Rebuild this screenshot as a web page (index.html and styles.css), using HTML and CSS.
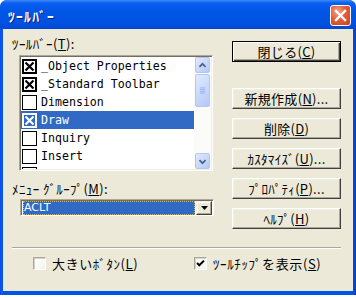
FILE: index.html
```html
<!DOCTYPE html>
<html lang="ja">
<head>
<meta charset="utf-8">
<title>ﾂｰﾙﾊﾞｰ</title>
<link rel="stylesheet" href="styles.css">
</head>
<body>
<div class="window">
  <div class="titlebar">
    <span class="title">ﾂｰﾙﾊﾞｰ</span>
    <span class="close"><svg width="19" height="19" viewBox="0 0 19 19"><path d="M5 5 L14 14 M14 5 L5 14" stroke="#fff" stroke-width="2.4" stroke-linecap="square"/></svg></span>
  </div>
  <div class="client">
    <div class="main">
      <div class="left">
        <div class="label">ﾂｰﾙﾊﾞｰ(<u>T</u>):</div>
        <div class="listbox">
          <ul class="items">
            <li class="item"><svg class="box" width="15" height="15" viewBox="0 0 15 15"><rect x="1" y="1" width="13" height="13" fill="#fff" stroke="#000" stroke-width="2"/><path d="M3.5 3.5 L11.5 11.5 M11.5 3.5 L3.5 11.5" stroke="#000" stroke-width="2.2"/></svg><span>_Object Properties</span></li>
            <li class="item"><svg class="box" width="15" height="15" viewBox="0 0 15 15"><rect x="1" y="1" width="13" height="13" fill="#fff" stroke="#000" stroke-width="2"/><path d="M3.5 3.5 L11.5 11.5 M11.5 3.5 L3.5 11.5" stroke="#000" stroke-width="2.2"/></svg><span>_Standard Toolbar</span></li>
            <li class="item"><svg class="box" width="15" height="15" viewBox="0 0 15 15"><rect x="0.5" y="0.5" width="14" height="14" fill="#fff" stroke="#000" stroke-width="1"/></svg><span>Dimension</span></li>
            <li class="item selected"><svg class="box" width="15" height="15" viewBox="0 0 15 15"><rect x="1" y="1" width="13" height="13" fill="#316ac5" stroke="#fff" stroke-width="2"/><path d="M3.5 3.5 L11.5 11.5 M11.5 3.5 L3.5 11.5" stroke="#fff" stroke-width="2.2"/></svg><span>Draw</span></li>
            <li class="item"><svg class="box" width="15" height="15" viewBox="0 0 15 15"><rect x="0.5" y="0.5" width="14" height="14" fill="#fff" stroke="#000" stroke-width="1"/></svg><span>Inquiry</span></li>
            <li class="item"><svg class="box" width="15" height="15" viewBox="0 0 15 15"><rect x="0.5" y="0.5" width="14" height="14" fill="#fff" stroke="#000" stroke-width="1"/></svg><span>Insert</span></li>
            <li class="item"><svg class="box" width="15" height="15" viewBox="0 0 15 15"><rect x="0.5" y="0.5" width="14" height="14" fill="#fff" stroke="#000" stroke-width="1"/></svg><span>Internet Utilities</span></li>
          </ul>
          <div class="vscroll">
            <span class="sbtn"><svg width="15" height="15" viewBox="0 0 15 15"><path d="M4 9 L7.5 5.5 L11 9" fill="none" stroke="#4d6185" stroke-width="2"/></svg></span>
            <span class="thumb"><svg width="15" height="9" viewBox="0 0 15 9"><path d="M4.5 1.5 H10.5 M4.5 3.5 H10.5 M4.5 5.5 H10.5 M4.5 7.5 H10.5" stroke="#8eaef0" stroke-width="1"/></svg></span>
            <span class="track"></span>
            <span class="sbtn"><svg width="15" height="15" viewBox="0 0 15 15"><path d="M4 6 L7.5 9.5 L11 6" fill="none" stroke="#4d6185" stroke-width="2"/></svg></span>
          </div>
        </div>
        <div class="label label-menu">ﾒﾆｭｰ ｸﾞﾙｰﾌﾟ(<u>M</u>):</div>
        <div class="combo">
          <span class="combo-value"><span class="sel">ACLT</span></span>
          <span class="combo-btn"><svg width="7" height="4" viewBox="0 0 7 4"><path d="M0 0 H7 L3.5 4 Z" fill="#000"/></svg></span>
        </div>
      </div>
      <div class="right">
        <button class="btn default">閉じる(<u>C</u>)</button>
        <button class="btn first">新規作成(<u>N</u>)...</button>
        <button class="btn">削除(<u>D</u>)</button>
        <button class="btn">ｶｽﾀﾏｲｽﾞ(<u>U</u>)...</button>
        <button class="btn">ﾌﾟﾛﾊﾟﾃｨ(<u>P</u>)...</button>
        <button class="btn">ﾍﾙﾌﾟ(<u>H</u>)</button>
      </div>
    </div>
    <div class="separator"></div>
    <div class="options">
      <label class="opt opt-large"><span class="cb"></span><span class="opt-text">大きいﾎﾞﾀﾝ(<u>L</u>)</span></label>
      <label class="opt"><span class="cb"><svg width="11" height="11" viewBox="0 0 11 11"><path d="M2 5 L4.3 7.3 L9 2.6" fill="none" stroke="#000" stroke-width="2"/></svg></span><span class="opt-text">ﾂｰﾙﾁｯﾌﾟを表示(<u>S</u>)</span></label>
    </div>
  </div>
</div>
</body>
</html>
```

FILE: styles.css
```css
* { box-sizing: border-box; margin: 0; padding: 0; }

html, body {
  width: 356px;
  height: 298px;
  background: #fff;
  overflow: hidden;
}

body {
  font-family: "Noto Sans CJK JP", sans-serif;
  font-size: 13px;
  color: #000;
}

.window {
  width: 356px;
  height: 295px;
  display: flex;
  flex-direction: column;
  background: linear-gradient(to right, #0831d9 0, #166aee 1px, #0055e5 2px, #0055e5 353px, #0840c8 355px);
  border-radius: 7px 7px 0 0;
  overflow: hidden;
}

.titlebar {
  height: 29px;
  flex: none;
  display: flex;
  align-items: center;
  justify-content: space-between;
  padding: 2px 5px 0 8px;
  background: linear-gradient(to bottom, #3d8cf7 0, #0a5ef0 3px, #0055e5 12px, #0053e2 22px, #0049d3 29px);
}

.title {
  color: #fff;
  font-weight: bold;
  font-size: 13.5px;
  letter-spacing: 1.3px;
  text-shadow: 1px 1px 0 #0a1a7a;
}

.close {
  width: 21px;
  height: 21px;
  display: flex;
  align-items: center;
  justify-content: center;
  border: 1px solid #fff;
  border-radius: 3px;
  background: radial-gradient(circle at 35% 30%, #f3a58a 0, #e35d3c 45%, #c9401f 100%);
}

.client {
  flex: 1;
  margin: 0 3px 4px 3px;
  background: #ece9d8;
  padding: 8px 12px 0 9px;
}

.main {
  display: flex;
  justify-content: space-between;
}

.left {
  width: 206px;
}

.label {
  height: 14px;
  line-height: 14px;
  letter-spacing: 0.4px;
}

.listbox {
  margin: 4px 0 0 7px;
  width: 194px;
  height: 116px;
  display: flex;
  background: #fff;
  border: 1px solid;
  border-color: #aca899 #fff #fff #aca899;
  box-shadow: inset 1px 1px 0 #716f64, inset -1px -1px 0 #f1efe2;
  padding: 1px;
  overflow: hidden;
}

.items {
  list-style: none;
  flex: 1;
  overflow: hidden;
  font-family: "DejaVu Sans Mono", monospace;
  font-size: 11.6px;
}

.item {
  height: 18px;
  display: flex;
  align-items: center;
  gap: 4px;
  padding-left: 1px;
  white-space: nowrap;
}

.item.selected {
  background: #316ac5;
  color: #fff;
}

.box { flex: none; }

.vscroll {
  width: 17px;
  flex: none;
  display: flex;
  flex-direction: column;
  background: #fbfbf8;
}

.sbtn, .thumb {
  display: flex;
  align-items: center;
  justify-content: center;
  margin: 0 1px;
  border: 1px solid #b3c6f4;
  border-radius: 2px;
  background: linear-gradient(135deg, #e2eafe 0, #c6d6fb 60%, #b4c8f6 100%);
}

.sbtn { height: 16px; flex: none; }

.thumb {
  height: 33px;
  margin-top: 1px;
  flex: none;
}

.track { flex: 1; }

.label-menu { margin-top: 11px; }

.combo {
  margin: 3px 0 0 8px;
  width: 194px;
  height: 17px;
  display: flex;
  background: #fff;
  border: 1px solid;
  border-color: #aca899 #fff #fff #aca899;
  box-shadow: inset 1px 1px 0 #716f64;
  padding: 1px 1px 0 1px;
}

.combo-value {
  flex: 1;
  padding: 0 1px;
  display: flex;
}

.sel {
  flex: 1;
  background: #316ac5;
  color: #fff;
  outline: 1px dotted #c9b46a;
  outline-offset: -1px;
  font-family: "DejaVu Sans", sans-serif;
  font-size: 11px;
  line-height: 13px;
  padding-left: 1px;
}

.combo-btn {
  width: 16px;
  height: 14px;
  display: flex;
  align-items: center;
  justify-content: center;
  background: #ece9d8;
  border: 1px solid;
  border-color: #f1efe2 #404040 #404040 #f1efe2;
  box-shadow: inset -1px -1px 0 #aca899, inset 1px 1px 0 #fff;
}

.right {
  width: 109px;
  padding-top: 4px;
  display: flex;
  flex-direction: column;
  gap: 9px;
}

.btn {
  width: 109px;
  height: 21px;
  font-family: inherit;
  font-size: 13px;
  letter-spacing: 0.3px;
  line-height: 17px;
  color: #000;
  background: #ece9d8;
  border: 1px solid;
  border-color: #fff #404040 #404040 #fff;
  box-shadow: inset -1px -1px 0 #aca899, inset 1px 1px 0 #f1efe2;
}

.btn.default {
  border-color: #000;
  box-shadow: inset 1px 1px 0 #fff, inset -1px -1px 0 #404040, inset -2px -2px 0 #aca899;
}

.btn.first { margin-top: 17px; }

.separator {
  margin-top: 18px;
  height: 2px;
  border-top: 1px solid #aca899;
  border-bottom: 1px solid #fff;
}

.options {
  margin-top: 7px;
  padding-left: 21px;
  display: flex;
  height: 14px;
  align-items: center;
}

.opt {
  display: flex;
  align-items: center;
  gap: 6px;
}

.opt-text { letter-spacing: 0.6px; }

.opt-large { width: 161px; }

.cb {
  width: 13px;
  height: 13px;
  flex: none;
  display: flex;
  align-items: center;
  justify-content: center;
  background: linear-gradient(135deg, #fff 0, #f4f3ee 100%);
  border: 1px solid;
  border-color: #aca899 #fff #fff #aca899;
  box-shadow: inset 1px 1px 0 #d4d0c8;
}
```
